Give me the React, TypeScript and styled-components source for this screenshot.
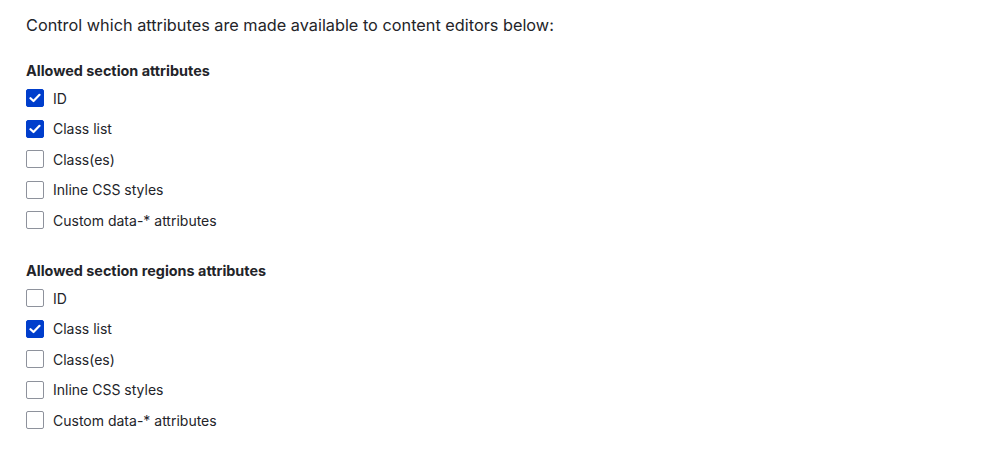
import styled, { createGlobalStyle } from "styled-components";

const GlobalStyle = createGlobalStyle`
  body {
    margin: 0;
    background: #ffffff;
    font-family: Inter, "Liberation Sans", Arial, sans-serif;
    color: #232429;
  }
`;

const Page = styled.div`
  padding: 13px 26px 0;
`;

const Description = styled.p`
  margin: 0 0 24px;
  font-size: 16.3px;
  line-height: 24px;
`;

const Fieldset = styled.fieldset`
  margin: 0 0 25.5px;
  padding: 0;
  border: 0;
`;

const Legend = styled.legend`
  padding: 0;
  margin-bottom: 2px;
  font-size: 14.4px;
  line-height: 20px;
  font-weight: 700;
`;

const Row = styled.label`
  display: flex;
  align-items: center;
  gap: 9px;
  height: 30.5px;
  font-size: 14px;
  cursor: pointer;
`;

const Box = styled.span<{ $checked: boolean }>`
  display: flex;
  align-items: center;
  justify-content: center;
  box-sizing: border-box;
  width: 18px;
  height: 18px;
  border-radius: 2px;
  border: 1px solid ${(p) => (p.$checked ? "#003ecc" : "#8e929c")};
  background: ${(p) => (p.$checked ? "#003ecc" : "#ffffff")};
`;

type Option = { label: string; checked: boolean };

const sectionAttrs: Option[] = [
  { label: "ID", checked: true },
  { label: "Class list", checked: true },
  { label: "Class(es)", checked: false },
  { label: "Inline CSS styles", checked: false },
  { label: "Custom data-* attributes", checked: false },
];

const regionAttrs: Option[] = [
  { label: "ID", checked: false },
  { label: "Class list", checked: true },
  { label: "Class(es)", checked: false },
  { label: "Inline CSS styles", checked: false },
  { label: "Custom data-* attributes", checked: false },
];

function Checkbox({ checked }: { checked: boolean }) {
  return (
    <Box $checked={checked}>
      {checked && (
        <svg width="12" height="10" viewBox="0 0 12 10" fill="none">
          <path
            d="M1.5 5.2 L4.5 8 L10.5 1.8"
            stroke="#ffffff"
            strokeWidth="2.2"
            strokeLinecap="round"
            strokeLinejoin="round"
          />
        </svg>
      )}
    </Box>
  );
}

function AttributeGroup({ title, options }: { title: string; options: Option[] }) {
  return (
    <Fieldset>
      <Legend>{title}</Legend>
      {options.map((o) => (
        <Row key={o.label}>
          <Checkbox checked={o.checked} />
          {o.label}
        </Row>
      ))}
    </Fieldset>
  );
}

export default function App() {
  return (
    <>
      <GlobalStyle />
      <Page>
        <Description>
          Control which attributes are made available to content editors below:
        </Description>
        <AttributeGroup title="Allowed section attributes" options={sectionAttrs} />
        <AttributeGroup title="Allowed section regions attributes" options={regionAttrs} />
      </Page>
    </>
  );
}
